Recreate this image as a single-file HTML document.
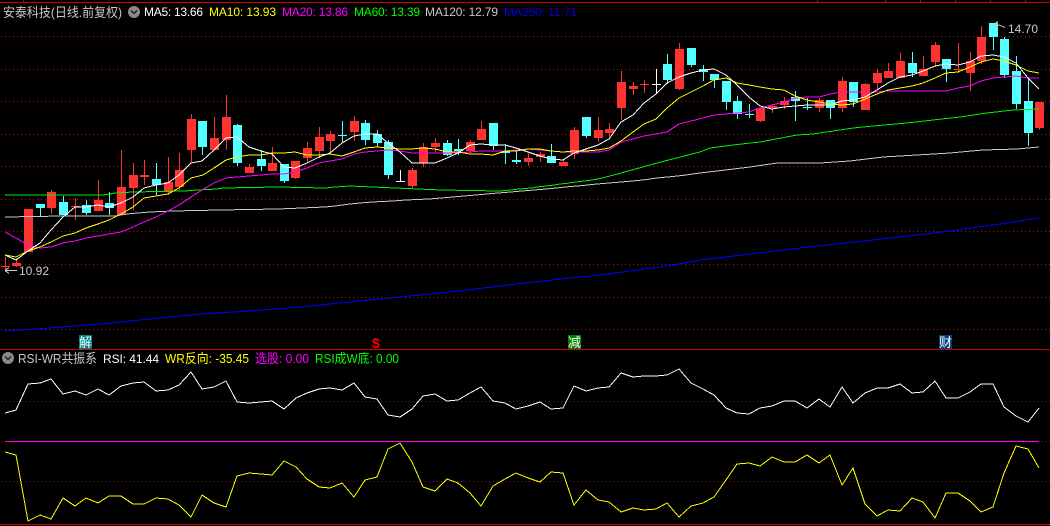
<!DOCTYPE html>
<html><head><meta charset="utf-8"><style>
html,body{margin:0;padding:0;background:#000;width:1050px;height:526px;overflow:hidden}
svg{display:block;position:absolute;left:0;top:0}
text{font-family:"Liberation Sans","WenQuanYi Zen Hei","Noto Sans CJK SC",sans-serif;font-size:13px;white-space:pre}
</style></head><body>
<svg width="1050" height="526" viewBox="0 0 1050 526" xmlns="http://www.w3.org/2000/svg">
<rect width="1050" height="526" fill="#000"/>
<g shape-rendering="crispEdges">
<path d="M1 36.5H1050M1 69.5H1050M1 101.5H1050M1 134.5H1050M1 166.5H1050M1 199.5H1050M1 231.5H1050M1 264.5H1050M1 297.5H1050M1 329.5H1050" stroke="#b41414" stroke-width="1" stroke-dasharray="1 3" fill="none"/>
<path d="M1 401.5H1050M1 481.5H1050M1041 441.5H1050M1 441.5H5" stroke="#8a1414" stroke-width="1" stroke-dasharray="1 3" fill="none"/>
<path d="M0 2.500H1050M23.500 0V2M817.500 0V2M885.500 0V2M920.500 0V2M955.500 0V2M990.500 0V2M1025.500 0V2" stroke="#c80000" stroke-width="1" fill="none"/>
<path d="M0 349.500H1050M0 524.500H1050" stroke="#d00000" stroke-width="1" fill="none"/>
<!-- red candles -->
<path fill="none" stroke="#ff3232" d="M5.5 257V272M1 266.5h9M16.5 258V267M51.5 190V214M75.5 198V220M71 206.5h9M98.5 180V200M121.5 150V215M133.5 163V210M144.5 160V185M168.5 157V195M179.5 153V190M191.5 114V162M214.5 117V150M226.5 95V150M249.5 164V173M272.5 147V171M295.5 161V179M307.5 142V163M319.5 127V158M330.5 131V152M354.5 116V141M412.5 168V188M423.5 143V167M435.5 138V152M470.5 140V153M481.5 121V140M528.5 153V166M540.5 152V162M563.5 160V166M574.5 127V159M598.5 117V142M609.5 123V137M621.5 71V120M633.5 82V95M644.5 80V93M640 84.5h9M679.5 43V90M760.5 108V122M772.5 104V113M784.5 97V109M819.5 98V112M842.5 77V112M865.5 83V110M877.5 69V89M888.5 63V78M900.5 53V78M923.5 56V76M935.5 42V67M958.5 43V73M954 69.5h9M970.5 52V91M981.5 26V64M1039.5 102V130"/>
<path fill="#ff3232" d="M12 263h9V266h-9zM24 209h9V252h-9zM47 192h9V208h-9zM94 200h9V211h-9zM117 187h9V215h-9zM129 175h9V188h-9zM140 175h9V177h-9zM164 182h9V192h-9zM175 170h9V187h-9zM187 119h9V150h-9zM210 138h9V150h-9zM222 117h9V140h-9zM245 167h9V173h-9zM268 163h9V171h-9zM291 161h9V178h-9zM303 148h9V158h-9zM315 137h9V151h-9zM326 134h9V141h-9zM350 121h9V132h-9zM408 170h9V186h-9zM419 147h9V163h-9zM431 143h9V147h-9zM466 142h9V151h-9zM477 129h9V140h-9zM524 158h9V162h-9zM536 154h9V157h-9zM559 162h9V166h-9zM570 130h9V154h-9zM594 130h9V138h-9zM605 129h9V133h-9zM617 82h9V108h-9zM629 86h9V89h-9zM675 49h9V89h-9zM756 108h9V121h-9zM768 106h9V108h-9zM780 101h9V105h-9zM815 100h9V108h-9zM838 81h9V108h-9zM861 84h9V110h-9zM873 73h9V83h-9zM884 71h9V78h-9zM896 61h9V78h-9zM919 69h9V76h-9zM931 45h9V62h-9zM966 61h9V73h-9zM977 37h9V61h-9zM1035 102h9V128h-9z"/>
<!-- cyan candles -->
<path fill="none" stroke="#54ffff" d="M40.5 204V216M63.5 196V215M86.5 200V215M109.5 192V215M156.5 163V195M202.5 121V155M237.5 124V166M261.5 150V171M284.5 164V183M342.5 121V143M338 135.5h9M365.5 120V145M377.5 130V147M388.5 140V179M447.5 140V156M458.5 139V155M493.5 123V150M505.5 144V164M516.5 150V164M551.5 144V163M586.5 117V138M667.5 54V84M691.5 48V67M703.5 65V81M714.5 74V88M726.5 81V110M737.5 96V119M749.5 104V118M745 114.5h9M795.5 91V121M807.5 98V110M803 107.5h9M830.5 100V119M853.5 82V107M912.5 52V77M946.5 59V82M993.5 23V50M1004.5 37V78M1016.5 56V109M1028.5 78V146"/>
<path fill="#54ffff" d="M36 204h9V208h-9zM59 202h9V215h-9zM82 205h9V213h-9zM105 203h9V208h-9zM152 179h9V185h-9zM198 121h9V147h-9zM233 125h9V163h-9zM257 159h9V166h-9zM280 164h9V181h-9zM361 123h9V140h-9zM373 134h9V143h-9zM384 142h9V175h-9zM443 143h9V155h-9zM454 149h9V151h-9zM489 123h9V146h-9zM501 151h9V153h-9zM512 160h9V162h-9zM547 156h9V163h-9zM582 117h9V136h-9zM663 64h9V80h-9zM687 48h9V65h-9zM699 69h9V72h-9zM710 74h9V80h-9zM722 81h9V102h-9zM733 101h9V114h-9zM791 97h9V101h-9zM826 100h9V108h-9zM849 82h9V102h-9zM908 63h9V73h-9zM942 59h9V69h-9zM989 23h9V37h-9zM1000 39h9V75h-9zM1012 71h9V104h-9zM1024 101h9V133h-9z"/>
<!-- white doji -->
<path fill="none" stroke="#ffffff" d="M400.5 170V181M396 181.5h9M656.5 69V93M652 84.5h9"/>
<!-- blue MA250 -->
<polyline fill="none" stroke="#0000ff" points="5,331 20,330 50,328 100,324 150,319 200,314 250,311 300,307 350,302 450,292 533,282 600,275 667,266 700,260 800,248 900,237 950,231 1000,224 1039,218"/>
<!-- grey MA120 -->
<polyline fill="none" stroke="#c8c8c8" points="5,217 63,216 115,216 127,214 138,213 150,212 173,211 220,210 278,209 302,208 325,207 335,206 350,204 360,203 372,202 393,201 406,200 429,199 441,198 453,197 464,196 476,195 487,194 498,193 511,192 522,191 534,190 546,189 557,188 565,187 577,186 583,185.500 592,184.500 603,183.500 615,182.500 627,181.500 638,180.500 647,179.500 653,178.500 662,177.500 673,176.500 682,175.500 700,173 717,171 750,167 777,163 820,163 850,161 883,157 917,155 950,153 983,150 1017,149 1039,147"/>
<!-- green MA60 -->
<polyline fill="none" stroke="#00f000" points="5,195 103,195 110,194 115,193 133,192 185,191 197,190 217,189 223,188 278,187 325,188 335,187 350,186 372,187 395,188 418,189 442,190 500,191 511,190 519,189 525,188.500 531,188 537,187 546,186 554,185 560,184 566,183.500 572,182.500 580,181.500 589,180.500 595,179.500 600,178.500 604,177.500 608,176.500 612,175.500 657,163 700,152 710,148 733,145 760,142 797,135 813,134 853,128 873,126 907,123 933,120 960,117 987,113 1013,110 1039,109"/>
<!-- magenta MA20 -->
<polyline fill="none" stroke="#ff00ff" points="5,232 16,238 28,245 40,248 51,247 63,243 75,241 86,238 98,236 109,234 121,232 133,227 144,222 156,217 168,211 179,205 191,197 202,190 214,183 226,178 237,177 249,176 261,175 272,174 284,174 295,172 307,168 319,163 330,161 342,159 354,154 365,152 377,151 388,150 400,151 412,153 423,153 435,153 447,153 458,153 470,152 481,151 493,151 505,151 516,150 528,149 540,150 551,151 563,152 574,152 586,152 598,152 609,150 621,142 633,139 644,136 656,134 667,132 679,124 691,121 703,118 714,115 726,114 737,113 749,112 760,108 772,105 784,102 795,98 807,97 819,97 830,94 842,92 853,92 865,92 877,92 888,91 900,91 912,91 923,91 935,91 946,91 958,88 970,86 981,81 993,78 1004,77 1016,76 1028,78 1039,78"/>
<!-- yellow MA10 -->
<polyline fill="none" stroke="#ffff00" points="5,255 16,257 28,251 40,247 51,242 63,236 75,233 86,228 98,224 109,220 121,214 133,207 144,198 156,196 168,194 179,188 191,178 203,175 214,168 226,160 237,157 249,155 261,155 272,153 284,153 295,152 307,155 319,155 330,154 342,156 354,152 365,148 377,147 388,148 400,149 412,149 423,148 435,149 447,152 458,152 470,154 481,154 493,155 505,151 516,151 528,149 540,149 551,151 563,152 574,151 586,151 598,150 609,148 621,141 633,132 644,124 656,119 667,108 679,98 691,92 703,86 714,80 726,78 737,83 749,85 760,87 772,89 784,90 795,96 807,100 819,102 830,104 842,105 853,104 865,99 877,94 888,90 900,88 912,86 923,83 935,78 946,73 958,72 970,67 981,62 993,59 1004,61 1016,65 1028,71 1039,73"/>
<!-- white MA5 -->
<polyline fill="none" stroke="#ffffff" points="5,255 16,260 28,251 40,243 51,230 63,217 75,207 86,207 98,205 109,207 121,203 133,197 144,188 156,185 168,183 179,175 191,163 202,161 214,150 226,138 237,137 249,147 261,151 272,154 284,167 295,168 307,163 319,157 330,153 342,143 354,136 365,134 377,134 388,143 400,152 412,163 423,163 435,163 447,158 458,153 470,145 481,144 493,145 505,145 516,148 528,152 540,156 551,159 563,160 574,153 586,149 598,145 609,139 621,122 633,115 644,103 656,94 667,83 679,77 691,73 703,70 714,69 726,75 737,85 749,97 760,106 772,109 784,107 795,106 807,105 819,105 830,105 842,101 853,100 865,97 877,90 888,83 900,77 912,75 923,71 935,66 946,64 958,65 970,62 981,56 993,55 1004,57 1016,63 1028,78 1039,89"/>
<!-- sub pane -->
<path d="M5 441.500H1039" stroke="#ff00ff" fill="none"/>
<polyline fill="none" stroke="#ffffff" points="5,413 16,410 28,384 40,383 51,379 63,394 75,391 86,395 98,389 109,395 121,386 133,383 144,382 156,391 168,390 179,385 191,372 202,389 214,387 226,381 237,402 249,403 261,402 272,401 284,409 296,398 307,393 319,389 330,388 342,390 354,383 365,397 377,399 388,415 400,417 412,409 423,396 435,394 447,401 458,400 470,393 481,387 493,401 505,403 516,409 528,406 540,402 551,409 563,408 574,386 586,391 598,388 609,387 621,373 633,377 644,376 656,376 667,375 679,369 691,383 703,389 714,395 726,408 737,413 749,414 760,408 772,406 784,401 795,401 807,408 819,399 830,407 842,387 853,403 865,393 877,388 888,388 900,384 912,393 923,392 935,381 946,398 958,398 970,392 981,384 993,384 1004,407 1016,416 1028,422 1039,408"/>
<polyline fill="none" stroke="#ffff00" points="5,452 16,455 28,521 40,515 51,519 63,498 75,506 86,498 98,503 109,496 121,496 133,504 144,504 156,498 168,499 179,505 191,517 202,495 214,503 226,507 237,476 249,473 261,474 272,475 284,461 296,467 307,479 319,487 330,488 342,483 354,497 365,480 377,477 388,449 400,443 412,462 423,487 435,491 447,479 458,483 470,493 481,506 493,486 505,479 516,473 528,478 540,482 551,472 563,473 574,505 586,490 598,500 609,502 621,512 633,508 644,510 656,509 667,503 679,517 691,506 703,503 714,497 726,480 737,464 749,463 760,466 772,457 784,462 795,462 807,455 819,463 830,455 842,485 853,468 865,504 877,516 888,510 900,511 912,498 923,502 935,518 946,493 958,493 970,501 981,512 993,507 1004,473 1016,446 1028,449 1039,468"/>
<!-- arrows -->
<path d="M995 23.500L1005 27.500M995 23.500l3 -2M995 23.500l3 3M5 270.500H17M5 270.500l4 -3M5 270.500l4 3" stroke="#c8c8c8" fill="none"/>
<!-- marker boxes -->
<rect x="79" y="335" width="13" height="14" fill="#007f7f"/>
<rect x="568" y="335" width="13" height="14" fill="#007f00"/>
<rect x="939" y="335" width="13" height="14" fill="#003f7f"/>
</g>
<!-- icons -->
<circle cx="134" cy="12" r="6" fill="#8a8a8a"/>
<path d="M131 10.500l3 3 3-3" stroke="#222" stroke-width="1.500" fill="none"/>
<circle cx="8" cy="358" r="6" fill="#8a8a8a"/>
<path d="M5 356.500l3 3 3-3" stroke="#222" stroke-width="1.500" fill="none"/>
<!-- header text -->
<text x="3" y="17" fill="#c8c8c8" textLength="119" lengthAdjust="spacingAndGlyphs">安泰科技(日线.前复权)</text>
<text x="144" y="16" fill="#ffffff" style="font-size:12px" textLength="59" lengthAdjust="spacing">MA5: 13.66</text>
<text x="209" y="16" fill="#ffff00" style="font-size:12px" textLength="67" lengthAdjust="spacing">MA10: 13.93</text>
<text x="282" y="16" fill="#ff00ff" style="font-size:12px" textLength="66" lengthAdjust="spacing">MA20: 13.86</text>
<text x="354" y="16" fill="#00ff00" style="font-size:12px" textLength="66" lengthAdjust="spacing">MA60: 13.39</text>
<text x="425" y="16" fill="#c8c8c8" style="font-size:12px" textLength="73" lengthAdjust="spacing">MA120: 12.79</text>
<text x="504" y="16" fill="#0000e0" style="font-size:12px" textLength="73" lengthAdjust="spacing">MA250: 11.71</text>
<!-- price labels -->
<text x="1008" y="33" fill="#c8c8c8" style="font-size:12px" textLength="30" lengthAdjust="spacing">14.70</text>
<text x="19" y="275" fill="#c8c8c8" style="font-size:12px" textLength="30" lengthAdjust="spacing">10.92</text>
<!-- markers -->
<text x="79" y="347" fill="#e8ffff" style="font-size:13px">解</text>
<text x="372" y="348" fill="#ff0000" style="font-size:14px;font-weight:bold">$</text>
<text x="568" y="347" fill="#ffffff" style="font-size:13px">减</text>
<text x="939" y="347" fill="#ffffff" style="font-size:13px">财</text>
<!-- sub header -->
<text x="18" y="363" fill="#c8c8c8" textLength="79" lengthAdjust="spacingAndGlyphs">RSI-WR共振系</text>
<text x="103" y="363" fill="#ffffff" style="font-size:12px" textLength="56" lengthAdjust="spacing">RSI: 41.44</text>
<text x="165" y="363" fill="#ffff00" textLength="84" lengthAdjust="spacingAndGlyphs">WR反向: -35.45</text>
<text x="255" y="363" fill="#ff00ff" textLength="54" lengthAdjust="spacingAndGlyphs">选股: 0.00</text>
<text x="315" y="363" fill="#00ff00" textLength="84" lengthAdjust="spacingAndGlyphs">RSI成W底: 0.00</text>
</svg>
</body></html>
